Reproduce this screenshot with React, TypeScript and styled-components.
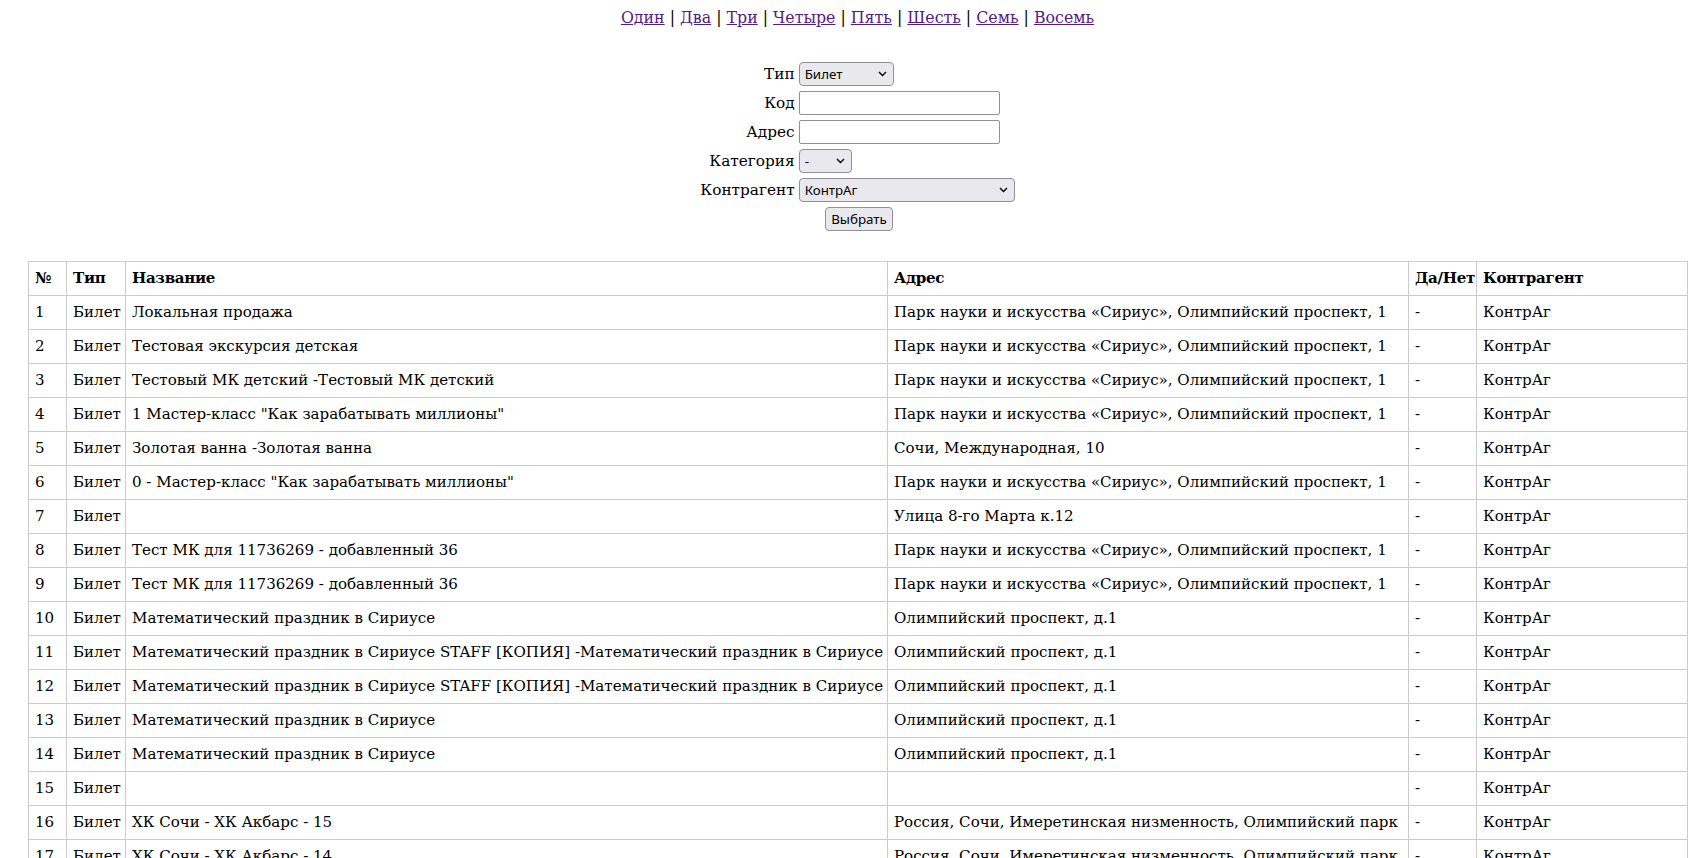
import React from "react";
import styled, { createGlobalStyle } from "styled-components";

const GlobalStyle = createGlobalStyle`
  html, body { background: #fff; }
  body {
    margin: 8px;
    font-family: "DejaVu Serif", serif;
    font-size: 15.3px;
    color: #000;
  }
`;

const Page = styled.div`
  padding: 0 10px 0 20px;
`;

const Nav = styled.nav`
  text-align: center;
  line-height: 20px;
  font-size: 15.8px;
`;

const NavLink = styled.a`
  color: #551a8b;
  text-decoration: underline;
`;

const Sep = styled.span`
  color: #000;
`;

const Form = styled.form`
  display: grid;
  grid-template-columns: auto auto;
  justify-content: center;
  column-gap: 4px;
  row-gap: 5px;
  margin-top: 34px;
  align-items: center;
`;

const Label = styled.label`
  text-align: right;
  line-height: 24px;
`;

const Field = styled.div`
  display: flex;
  align-items: center;
`;

const SelectWrap = styled.div`
  position: relative;
  display: inline-flex;
`;

const Select = styled.select<{ $w: number }>`
  appearance: none;
  -webkit-appearance: none;
  width: ${(p) => p.$w}px;
  height: 24px;
  box-sizing: border-box;
  padding: 0 20px 0 5px;
  background: #e9e9ed;
  border: 1px solid #8f8f9d;
  border-radius: 4px;
  color: #000;
  font-family: "Noto Sans", sans-serif;
  font-size: 13.333px;
`;

const Chevron = styled.svg`
  position: absolute;
  right: 7px;
  top: 9px;
  width: 9px;
  height: 6px;
  pointer-events: none;
`;

const Input = styled.input`
  width: 201px;
  height: 24px;
  box-sizing: border-box;
  padding: 1px 2px;
  background: #fff;
  border: 1px solid #8f8f9d;
  border-radius: 2px;
  font-family: "Noto Sans", sans-serif;
  font-size: 13.333px;
`;

const ButtonRow = styled.div`
  grid-column: 1 / span 2;
  display: flex;
  justify-content: center;
  padding-left: 3px;
`;

const Button = styled.button`
  height: 24px;
  box-sizing: border-box;
  padding: 0 5px;
  background: #e9e9ed;
  border: 1px solid #8f8f9d;
  border-radius: 4px;
  color: #000;
  font-family: "Noto Sans", sans-serif;
  font-size: 13.333px;
`;

const Table = styled.table`
  margin-top: 30px;
  width: 100%;
  border-collapse: collapse;
  table-layout: fixed;
  font-size: 15.05px;
`;

const Th = styled.th`
  border: 1px solid #ccc;
  padding: 6px 4px 6px 6px;
  text-align: left;
  font-weight: bold;
  line-height: 21px;
  letter-spacing: -0.3px;
  white-space: nowrap;
  overflow: hidden;
`;

const Td = styled.td`
  border: 1px solid #ccc;
  padding: 6px 4px 6px 6px;
  line-height: 21px;
  white-space: nowrap;
  overflow: hidden;
`;

const PARK = "Парк науки и искусства «Сириус», Олимпийский проспект, 1";
const OLYMP = "Олимпийский проспект, д.1";
const RUS = "Россия, Сочи, Имеретинская низменность, Олимпийский парк";
const MATH = "Математический праздник в Сириусе";
const MATH_STAFF =
  "Математический праздник в Сириусе STAFF [КОПИЯ] -Математический праздник в Сириусе";

const rows: [string, string][] = [
  ["Локальная продажа", PARK],
  ["Тестовая экскурсия детская", PARK],
  ["Тестовый МК детский -Тестовый МК детский", PARK],
  ['1 Мастер-класс "Как зарабатывать миллионы"', PARK],
  ["Золотая ванна -Золотая ванна", "Сочи, Международная, 10"],
  ['0 - Мастер-класс "Как зарабатывать миллионы"', PARK],
  ["", "Улица 8-го Марта к.12"],
  ["Тест МК для 11736269 - добавленный 36", PARK],
  ["Тест МК для 11736269 - добавленный 36", PARK],
  [MATH, OLYMP],
  [MATH_STAFF, OLYMP],
  [MATH_STAFF, OLYMP],
  [MATH, OLYMP],
  [MATH, OLYMP],
  ["", ""],
  ["ХК Сочи - ХК Акбарс - 15", RUS],
  ["ХК Сочи - ХК Акбарс - 14", RUS],
];

const links = ["Один", "Два", "Три", "Четыре", "Пять", "Шесть", "Семь", "Восемь"];

const colWidths = [38, 59, 762, 521, 68, 211];

function Dropdown({ w, value }: { w: number; value: string }) {
  return (
    <SelectWrap>
      <Select $w={w} defaultValue={value}>
        <option>{value}</option>
      </Select>
      <Chevron viewBox="0 0 9 6">
        <path d="M1 1 L4.5 4.5 L8 1" fill="none" stroke="#000" strokeWidth="1.4" />
      </Chevron>
    </SelectWrap>
  );
}

export default function App() {
  return (
    <>
      <GlobalStyle />
      <Page>
        <Nav>
          {links.map((l, i) => (
            <React.Fragment key={l}>
              {i > 0 && <Sep> | </Sep>}
              <NavLink href="#">{l}</NavLink>
            </React.Fragment>
          ))}
        </Nav>
        <Form onSubmit={(e) => e.preventDefault()}>
          <Label>Тип</Label>
          <Field>
            <Dropdown w={95} value="Билет" />
          </Field>
          <Label>Код</Label>
          <Field>
            <Input type="text" />
          </Field>
          <Label>Адрес</Label>
          <Field>
            <Input type="text" />
          </Field>
          <Label>Категория</Label>
          <Field>
            <Dropdown w={53} value="-" />
          </Field>
          <Label>Контрагент</Label>
          <Field>
            <Dropdown w={216} value="КонтрАг" />
          </Field>
          <ButtonRow>
            <Button type="submit">Выбрать</Button>
          </ButtonRow>
        </Form>
        <Table>
          <colgroup>
            {colWidths.map((w, i) => (
              <col key={i} style={{ width: w }} />
            ))}
          </colgroup>
          <thead>
            <tr>
              <Th>№</Th>
              <Th>Тип</Th>
              <Th>Название</Th>
              <Th>Адрес</Th>
              <Th>Да/Нет</Th>
              <Th>Контрагент</Th>
            </tr>
          </thead>
          <tbody>
            {rows.map(([name, addr], i) => (
              <tr key={i}>
                <Td>{i + 1}</Td>
                <Td>Билет</Td>
                <Td>{name}</Td>
                <Td>{addr}</Td>
                <Td>-</Td>
                <Td>КонтрАг</Td>
              </tr>
            ))}
          </tbody>
        </Table>
      </Page>
    </>
  );
}
